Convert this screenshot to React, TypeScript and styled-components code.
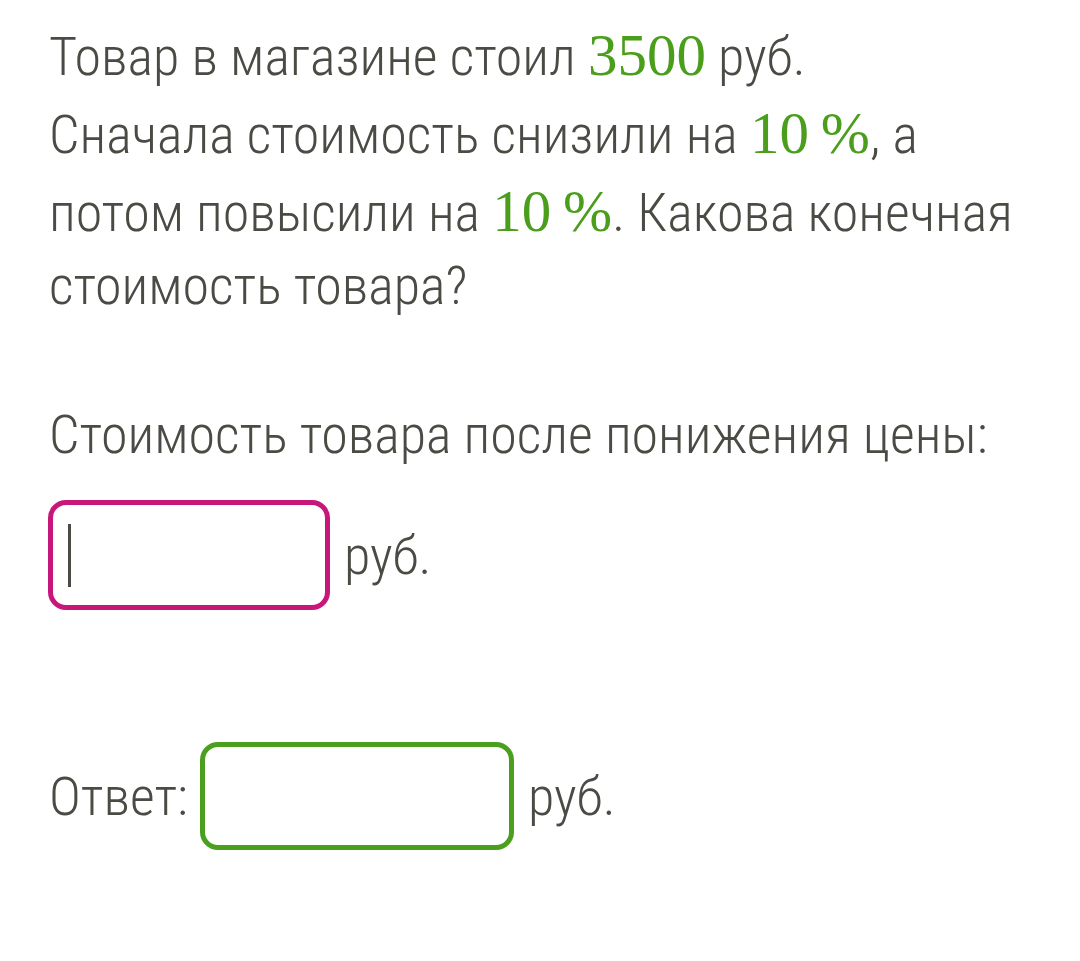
import React from "react";
import styled, { createGlobalStyle } from "styled-components";

const Global = createGlobalStyle`
  html, body { margin: 0; padding: 0; background: #ffffff; }
  body { font-family: Roboto, "Liberation Sans", sans-serif; }
`;

const Page = styled.div`
  width: 1080px;
  min-height: 961px;
  box-sizing: border-box;
  padding: 16px 30px 0 49px;
  color: #4b4b45;
  font-family: "Roboto Condensed", Roboto, "Liberation Sans", sans-serif;
  font-weight: 300;
  font-stretch: 75%;
  font-size: 54px;
`;

const Paragraph = styled.p`
  margin: 0;
  line-height: 72px;
`;

const Math = styled.span`
  font-family: "Liberation Serif", "Times New Roman", serif;
  font-weight: 400;
  font-stretch: 100%;
  font-size: 59px;
  line-height: 78px;
  color: #4a9e1c;
`;

const Label = styled.p`
  margin: 77px 0 0;
  line-height: 72px;
`;

const Row = styled.div<{ $top: number }>`
  display: flex;
  align-items: center;
  margin-top: ${(p) => p.$top}px;
`;

const Field = styled.div<{ $color: string; $width: number; $height: number }>`
  box-sizing: border-box;
  flex: none;
  width: ${(p) => p.$width}px;
  height: ${(p) => p.$height}px;
  margin-left: -1px;
  border: 5px solid ${(p) => p.$color};
  border-radius: 18px;
  display: flex;
  align-items: center;
  padding-left: 15px;
`;

const Caret = styled.div`
  width: 3px;
  height: 63px;
  background: #4b4b45;
`;

const Unit = styled.span<{ $gap?: number }>`
  line-height: 54px;
  padding-top: 2px;
  margin-left: ${(p) => p.$gap ?? 0}px;
  margin-right: ${(p) => (p.$gap ? 0 : 13)}px;
`;

export default function App() {
  return (
    <>
      <Global />
      <Page>
        <Paragraph>
          Товар в магазине стоил <Math>3500</Math> руб.
          <br />
          Сначала стоимость снизили на <Math>10&thinsp;%</Math>, а потом повысили на{" "}
          <Math>10&thinsp;%</Math>. Какова конечная стоимость товара?
        </Paragraph>
        <Label>Стоимость товара после понижения цены:</Label>
        <Row $top={29}>
          <Field $color="#c8177b" $width={282} $height={110}>
            <Caret />
          </Field>
          <Unit $gap={14}>руб.</Unit>
        </Row>
        <Row $top={132}>
          <Unit>Ответ:</Unit>
          <Field $color="#4aa01e" $width={314} $height={108} />
          <Unit $gap={14}>руб.</Unit>
        </Row>
      </Page>
    </>
  );
}
